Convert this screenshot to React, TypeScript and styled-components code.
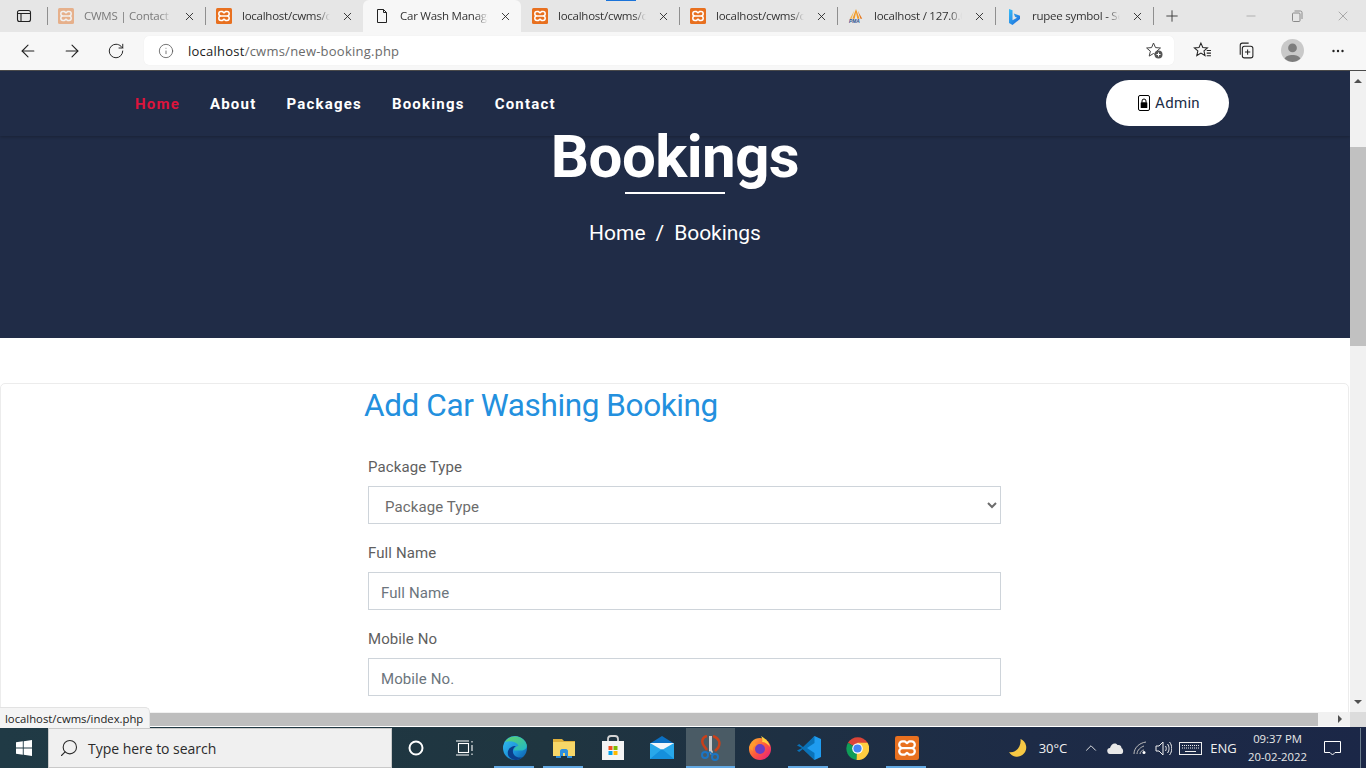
import React from 'react';
import styled, { createGlobalStyle } from 'styled-components';
import { ArrowLeft, ArrowRight, RotateCw, Info, X, Plus, Minus, Search, ChevronUp } from 'lucide-react';

const Global = createGlobalStyle`
  html, body { margin: 0; padding: 0; width: 1366px; height: 768px; overflow: hidden; background: #fff; }
  * { box-sizing: border-box; }
`;

const ui = `"Open Sans", "Noto Sans", sans-serif`;
const web = `Roboto, "Noto Sans", sans-serif`;

const Screen = styled.div`
  width: 1366px; height: 768px; display: flex; flex-direction: column; position: relative; overflow: hidden;
`;

/* ---------- tab strip ---------- */
const TabStrip = styled.div`
  height: 32px; flex: none; background: #e6e6e6; display: flex; align-items: stretch; position: relative; font-family: ${ui};
`;
const SideButton = styled.div`
  width: 47px; display: flex; align-items: center; justify-content: center; color: #222;
`;
const Tab = styled.div<{ $active?: boolean; $sep?: boolean; $dim?: boolean }>`
  width: 158px; height: 32px; display: flex; align-items: center; padding-left: 11px; position: relative;
  background: ${p => (p.$active ? '#f7f7f7' : 'transparent')};
  border-radius: ${p => (p.$active ? '6px 6px 0 0' : '0')};
  color: ${p => (p.$dim ? '#7a7a7a' : '#333')};
  ${p => p.$sep && `&::before { content: ''; position: absolute; left: 0; top: 7px; bottom: 7px; width: 1px; background: #8f8f8f; }`}
`;
const TabIcon = styled.span`
  width: 16px; height: 16px; flex: none; display: flex;
`;
const TabTitle = styled.span`
  margin-left: 10px; width: 88px; flex: none; overflow: hidden; white-space: nowrap; font-size: 11.5px; line-height: 16px; letter-spacing: -.25px;
  -webkit-mask-image: linear-gradient(to right, #000 86%, transparent 100%);
  mask-image: linear-gradient(to right, #000 86%, transparent 100%);
`;
const TabClose = styled.span`
  margin-left: 10px; width: 14px; height: 14px; display: flex; align-items: center; justify-content: center; color: #222;
`;
const NewTab = styled.div`
  width: 37px; display: flex; align-items: center; justify-content: center; color: #333; position: relative;
  &::before { content: ''; position: absolute; left: 0; top: 7px; bottom: 7px; width: 1px; background: #8f8f8f; }
`;
const Spacer = styled.div` flex: 1; `;
const WinBtn = styled.div`
  width: 46px; display: flex; align-items: center; justify-content: center; color: #8a8a8a;
`;
const Progress = styled.div`
  position: absolute; left: 606px; top: 0; width: 30px; height: 1px; background: #1a73d9;
`;

/* ---------- toolbar ---------- */
const Toolbar = styled.div`
  height: 39px; flex: none; background: #f7f7f7; display: flex; align-items: center; padding: 0 0 1px 6px; font-family: ${ui}; border-bottom: 1px solid #4a4a4a;
`;
const NavBtn = styled.div`
  width: 44px; height: 32px; display: flex; align-items: center; justify-content: center; color: #222;
`;
const Address = styled.div`
  margin-left: 6px; width: 1030px; height: 29px; background: #fff; border-radius: 5px; display: flex; align-items: center; padding-left: 14px; position: relative; box-shadow: 0 0 1px rgba(0,0,0,.08);
`;
const Url = styled.span`
  margin-left: 14px; font-size: 13px; color: #6a6a6a; letter-spacing: .24px;
  b { font-weight: 400; color: #1b1b1b; }
`;
const AddrFav = styled.span`
  position: absolute; right: 10px; top: 5px; display: flex;
`;
const ToolIcon = styled.div<{ $w: number }>`
  width: ${p => p.$w}px; display: flex; align-items: center; justify-content: center; color: #222;
`;
const ToolIcons = styled.div`
  display: flex; margin-left: 6px;
`;

/* ---------- viewport ---------- */
const ViewRow = styled.div`
  flex: 1; display: flex; min-height: 0;
`;
const Page = styled.div`
  flex: 1; min-width: 0; overflow: hidden; background: #fff; font-family: ${web}; display: flex; flex-direction: column;
`;
const TopNav = styled.nav`
  height: 65px; flex: none; background: #202c47; display: flex; align-items: center; justify-content: space-between; padding: 0 121px 0 135px; position: relative; z-index: 2; box-shadow: 0 1px 3px rgba(0,0,0,.25);
`;
const NavLinks = styled.div` display: flex; gap: 30px; `;
const NavLink = styled.a<{ $on?: boolean }>`
  font-size: 15px; font-weight: 700; letter-spacing: 1.2px; color: ${p => (p.$on ? '#dc143c' : '#fff')}; line-height: 20px;
`;
const AdminBtn = styled.a`
  width: 123px; height: 46px; border-radius: 23px; background: #fff; color: #202c47; display: flex; align-items: center; justify-content: center; gap: 5px; font-size: 15px; letter-spacing: .3px; margin-top: -1px; padding-left: 3px;
`;
const Hero = styled.header`
  height: 202px; flex: none; background: #202c47; display: flex; flex-direction: column; align-items: center; position: relative;
`;
const HeroTitle = styled.h1`
  margin: -15px 0 0; font-size: 60px; line-height: 72px; font-weight: 700; color: #fff; position: relative; z-index: 3; letter-spacing: -.55px;
  &::after { content: ''; position: absolute; left: 74px; bottom: -1px; width: 100px; height: 2px; background: #fff; }
`;
const Crumbs = styled.div`
  margin-top: 26px; color: #fff; font-size: 21px; line-height: 28px; display: flex; gap: 10px; letter-spacing: -.03px;
`;
const Card = styled.section`
  margin: 45px 1px 0 0; flex: 1; border: 1px solid #ececec; border-radius: 5px 5px 0 0; padding: 1px 0 0 363px;
`;
const FormTitle = styled.h2`
  margin: 0; font-size: 31.5px; font-weight: 400; line-height: 42px; color: #2390de; letter-spacing: -.4px;
`;
const Field = styled.div`
  width: 633px; margin-left: 4px; margin-bottom: 18px;
  &:first-of-type { margin-top: 29px; }
`;
const Label = styled.label`
  display: block; font-size: 15px; line-height: 22px; color: #5f5f5f; margin-bottom: 8px; letter-spacing: .1px;
`;
const Input = styled.input`
  display: block; width: 100%; height: 38px; border: 1px solid #ced4da; padding: 3px 12px 0; font-family: ${web}; font-size: 15px; color: #555; background: #fff; border-radius: 0; outline: none; letter-spacing: .1px;
  &::placeholder { color: #6c757d; opacity: 1; }
`;
const Select = styled.select`
  display: block; width: 100%; height: 38px; border: 1px solid #ced4da; padding: 3px 12px 0; font-family: ${web}; font-size: 15px; color: #6c6c6c; background: #fff; border-radius: 0; outline: none; letter-spacing: .1px;
`;

/* ---------- scrollbars ---------- */
const VBar = styled.div`
  width: 16px; flex: none; background: #f1f1f1; display: flex; flex-direction: column; align-items: center;
`;
const VThumb = styled.div`
  width: 16px; height: 199px; background: #c1c1c1; margin-top: 64px;
`;
const Arrow = styled.span<{ $dir: 'up' | 'down' | 'right' }>`
  width: 0; height: 0; display: block;
  ${p => p.$dir === 'up' && 'border-left:4px solid transparent;border-right:4px solid transparent;border-bottom:4px solid #505050;margin-top:8px;'}
  ${p => p.$dir === 'down' && 'border-left:4px solid transparent;border-right:4px solid transparent;border-top:4px solid #505050;margin-top:auto;margin-bottom:8px;'}
  ${p => p.$dir === 'right' && 'border-top:4px solid transparent;border-bottom:4px solid transparent;border-left:4px solid #505050;'}
`;
const HBar = styled.div`
  height: 15px; flex: none; background: #f1f1f1; display: flex; align-items: center; border-bottom: 1px solid #fff;
`;
const HThumb = styled.div`
  width: 1318px; height: 13px; background: #bebebe;
`;
const HArrowBox = styled.div`
  width: 32px; height: 14px; display: flex; align-items: center; justify-content: center;
  padding-left: 12px;
`;
const Corner = styled.div`
  width: 16px; height: 15px; background: #dcdcdc;
`;
const StatusTip = styled.div`
  position: absolute; left: 0; top: 707px; height: 21px; padding: 0 6px 0 5px; background: #f4f4f4; border: 1px solid #e2e2e2; border-left: 0; border-bottom: 0; border-radius: 0 5px 0 0; font: 11.3px/21px ${ui}; color: #222; z-index: 5;
`;

/* ---------- taskbar ---------- */
const Taskbar = styled.div`
  height: 41px; flex: none; background: linear-gradient(to right, #203a45 0%, #1f3540 40%, #1d2b46 75%, #1b2747 100%); display: flex; align-items: stretch; font-family: ${ui}; color: #fff; padding-top: 1px;
`;
const Start = styled.div`
  width: 48px; display: flex; align-items: center; justify-content: center;
`;
const SearchBox = styled.div`
  width: 344px; background: #f0f0f0; border: 1px solid #c9c9c9; display: flex; align-items: center; padding-left: 10px; color: #2b2b2b; font-size: 14px;
`;
const SearchLabel = styled.span` margin-left: 9px; letter-spacing: -.03px; `;
const TaskSlot = styled.div<{ $w?: number; $open?: boolean; $active?: boolean }>`
  width: ${p => p.$w ?? 49}px; display: flex; align-items: center; justify-content: center; position: relative;
  background: ${p => (p.$active ? '#4a5b65' : 'transparent')};
  ${p => p.$open && `&::after { content: ''; position: absolute; bottom: 0; left: ${p.$active ? 0 : 4}px; right: ${p.$active ? 0 : 5}px; height: 2px; background: #63a9e3; }`}
`;
const Tray = styled.div`
  margin-left: auto; display: flex; align-items: center; padding-right: 1px;
`;
const TrayItem = styled.div<{ $w: number; $pr?: number }>`
  width: ${p => p.$w}px; padding-right: ${p => p.$pr ?? 0}px; display: flex; align-items: center; justify-content: center; height: 100%; font-size: 13px; color: #f0f0f0;
`;
const Clock = styled.div`
  width: 71px; text-align: center; font-size: 11.3px; line-height: 18px; color: #e8e8e8; white-space: nowrap;
`;
const ShowDesktop = styled.div`
  width: 5px; margin-left: 9px; height: 100%; border-left: 1px solid #6a7c8c;
`;

/* ---------- drawn icons ---------- */
const Xampp = ({ s = 16, faded = false }: { s?: number; faded?: boolean }) => (
  <svg width={s} height={s} viewBox="0 0 16 16" aria-hidden opacity={faded ? 0.45 : 1}>
    <rect width="16" height="16" rx="1.5" fill="#e8701f" />
    <path d="M5 3.600h1.500L8 4.800l1.500-1.200H11a2.200 2.200 0 0 1 0 4.400 2.200 2.200 0 0 1 0 4.400H9.500L8 11.200l-1.500 1.200H5A2.200 2.200 0 0 1 5 8a2.200 2.200 0 0 1 0-4.400zM5 8h6" fill="none" stroke="#fff" strokeWidth="1.500" strokeLinejoin="round" />
  </svg>
);
const Doc = () => (
  <svg width="16" height="16" viewBox="0 0 16 16" fill="none" stroke="#222" strokeWidth="1"><path d="M3.500 1.500h6l3 3v10h-9z M9.500 1.500v3h3" /></svg>
);
const Pma = () => (
  <svg width="18" height="16" viewBox="0 0 18 16"><path d="M9 0 L13 11 H10.500 L9 4 7.500 11 H5z" fill="#f29a26" /><path d="M11 2 L16 11 H14z" fill="#e6781e" /><path d="M7 2 L2 11 H4z" fill="#f6b24a" /><text x="1" y="15.500" fontSize="5.500" fontWeight="700" fontStyle="italic" fill="#2a4f8f" fontFamily="Liberation Sans">PMA</text></svg>
);
const Bing = () => (
  <svg width="16" height="18" viewBox="0 0 16 18"><defs><linearGradient id="bg" x1="0" y1="0" x2="1" y2="1"><stop offset="0" stopColor="#37bdf8" /><stop offset="1" stopColor="#1b66d8" /></linearGradient></defs><path d="M3 1l3.500 1.200v10l4.500-2.500-2-1-1.200-3.200 6.200 2.200v3.300L6.500 17 3 15z" fill="url(#bg)" /></svg>
);
const LayoutIcon = () => (
  <svg width="16" height="16" viewBox="0 0 16 16" fill="none" stroke="#222" strokeWidth="1.100"><rect x="1.500" y="2.500" width="13" height="11" rx="2" /><path d="M1.500 5.500h13M5 5.500v8" /></svg>
);
const FavAdd = () => (
  <svg width="19" height="19" viewBox="0 0 19 19" fill="none"><path d="M8.500 2l2 4.600 5 .4-3.800 3.200 1.200 4.900L8.500 12.500 4.200 15.100l1.200-4.900L1.600 7l5-.4z" stroke="#444" /><circle cx="13.500" cy="13.500" r="4" fill="#555" /><path d="M13.500 11.500v4M11.500 13.500h4" stroke="#fff" /></svg>
);
const Favs = () => (
  <svg width="19" height="19" viewBox="0 0 18 18" fill="none" stroke="#222"><path d="M7.500 2l1.800 4.100 4.400.4-3.300 2.900 1 4.400L7.500 11.500 3.600 13.800l1-4.400L1.300 6.500l4.400-.4z" /><path d="M13 9h4M13 11.500h4M13 14h4" /></svg>
);
const Collections = () => (
  <svg width="19" height="19" viewBox="0 0 18 18" fill="none" stroke="#222"><rect x="6" y="5" width="10" height="11" rx="2" /><path d="M11 8v5M8.500 10.500h5M4 13V4a2 2 0 0 1 2-2h6" /></svg>
);
const Avatar = () => (
  <svg width="23" height="23" viewBox="0 0 22 22"><circle cx="11" cy="11" r="11" fill="#c9c9c9" /><circle cx="11" cy="8.500" r="4.200" fill="#7d7d7d" /><path d="M3.500 19c1-5 14-5 15 0a11 11 0 0 1-15 0z" fill="#7d7d7d" /></svg>
);
const Dots = () => (
  <svg width="16" height="16" viewBox="0 0 16 16" fill="#222"><circle cx="3.500" cy="8" r="1.200" /><circle cx="8" cy="8" r="1.200" /><circle cx="12.500" cy="8" r="1.200" /></svg>
);
const Restore = () => (
  <svg width="12" height="12" viewBox="0 0 12 12" fill="none" stroke="#8a8a8a"><rect x="1.500" y="3" width="7.500" height="8.500" rx="1" /><path d="M3.500 1h6a1.500 1.500 0 0 1 1.500 1.500V9" /></svg>
);
const LockIcon = () => (
  <svg width="12" height="16" viewBox="0 0 12 16"><rect x=".5" y=".5" width="11" height="15" rx="1.500" fill="#fff" stroke="#000" /><path d="M4 7.500V6a2 2 0 0 1 4 0v1.500" fill="none" stroke="#000" /><rect x="2.700" y="7.300" width="6.600" height="5.700" rx=".6" fill="#000" /></svg>
);
const WinLogo = () => (
  <svg width="16" height="16" viewBox="0 0 16 16" fill="#fff"><path d="M0 2.300l6.800-1v6.300H0zM7.700 1.200L16 0v7.600H7.700zM0 8.400h6.800v6.300l-6.800-1zM7.700 8.400H16V16l-8.300-1.200z" /></svg>
);
const Cortana = () => (
  <svg width="16" height="16" viewBox="0 0 16 16" fill="none" stroke="#fff" strokeWidth="2"><circle cx="8" cy="8" r="6.500" /></svg>
);
const TaskView = () => (
  <svg width="18" height="16" viewBox="0 0 18 16" fill="none" stroke="#fff" strokeWidth="1.100"><rect x="2.500" y="3.500" width="10" height="9" /><path d="M0 1h13M0 15h13M16 1v1.500M16 5v6M16 13.500V15" /></svg>
);
const Edge = () => (
  <svg width="26" height="26" viewBox="0 0 26 26">
    <defs><linearGradient id="eg" x1="0" y1="0" x2="1" y2="1"><stop offset="0" stopColor="#35c1f1" /><stop offset=".6" stopColor="#1b8fd8" /><stop offset="1" stopColor="#0c59a4" /></linearGradient>
      <linearGradient id="eg2" x1="0" y1="0" x2="1" y2="1"><stop offset="0" stopColor="#60d36b" /><stop offset="1" stopColor="#1fb6c9" /></linearGradient></defs>
    <circle cx="13" cy="13" r="12" fill="url(#eg)" />
    <path d="M3 7C7 0 20-1 24.500 9c1 3-.5 6-4 6.500H12c0-3 3-4 4.500-5C14 6 7 5.500 3 7z" fill="url(#eg2)" />
    <path d="M11 15c-1 5 4 9 10 7-3 2.500-6 3-8 3-6-1-8-5-7-9 .8-3 4-5 8-5-1.500 1-2.600 2-3 4z" fill="#0b3f8c" />
  </svg>
);
const Explorer = () => (
  <svg width="24" height="22" viewBox="0 0 24 22"><path d="M1 2h9l2 2h11v15H1z" fill="#e0b13c" /><rect x="1" y="5" width="22" height="14" fill="#f7d768" /><path d="M8 19v-5c0-1 1-2 2-2h4c1 0 2 1 2 2v5h-3v-3h-2v3z" fill="#2d8fdc" /><rect x="4" y="19" width="5" height="2" fill="#2d8fdc" /><rect x="15" y="19" width="5" height="2" fill="#2d8fdc" /></svg>
);
const Store = () => (
  <svg width="24" height="26" viewBox="0 0 24 26"><path d="M7 7V4a3 3 0 0 1 3-3h4a3 3 0 0 1 3 3v3" fill="none" stroke="#d4d4d4" strokeWidth="1.800" /><rect x="1" y="6" width="22" height="19" fill="#f4f4f4" /><rect x="7.500" y="11" width="4" height="4" fill="#f25022" /><rect x="12.500" y="11" width="4" height="4" fill="#7fba00" /><rect x="7.500" y="16" width="4" height="4" fill="#00a4ef" /><rect x="12.500" y="16" width="4" height="4" fill="#ffb900" /></svg>
);
const Mail = () => (
  <svg width="26" height="24" viewBox="0 0 26 24"><path d="M13 0L25 7.500H1z" fill="#0a6fc2" /><rect x="1" y="7" width="24" height="16" fill="#28a8ea" /><path d="M1 7h24L13 14z" fill="#f3f7fb" /><path d="M1 23L13 13l12 10z" fill="#1590dc" /></svg>
);
const Snip = () => (
  <svg width="22" height="26" viewBox="0 0 22 26" fill="none"><path d="M7 1c-5 1-6 6-3 10l3 4" stroke="#c9401a" strokeWidth="2.500" /><path d="M13 1c6 2 8 7 5 12l-3 3" stroke="#c9401a" strokeWidth="2.500" /><path d="M9 1h3v14l1 2-2 3-2-4z" fill="#c9c9c9" /><circle cx="5" cy="20" r="3" stroke="#1b75c4" strokeWidth="2" /><circle cx="15" cy="22" r="3" stroke="#1b75c4" strokeWidth="2" /><path d="M7 19l3-2 3 3" stroke="#1b75c4" strokeWidth="1.500" /></svg>
);
const Firefox = () => (
  <svg width="24" height="24" viewBox="0 0 24 24"><defs><linearGradient id="ff" x1="0" y1="0" x2="1" y2="1"><stop offset="0" stopColor="#ffbd2e" /><stop offset=".5" stopColor="#ff5a3c" /><stop offset="1" stopColor="#e31587" /></linearGradient></defs><circle cx="12" cy="13" r="11" fill="url(#ff)" /><path d="M13 0c5 3 8 6 9 11-2-3-5-5-8-5 1-2 0-4-1-6z" fill="#ffd23f" /><circle cx="12" cy="13" r="5" fill="#6a3fc4" /><path d="M1 12C2 8 5 5 7 4c-1 3 0 4 2 5-3 0-5 3-4 6z" fill="#ff9a2e" /></svg>
);
const VSCode = () => (
  <svg width="24" height="24" viewBox="0 0 24 24"><path d="M17.500 0L24 3v18l-6.500 3L6 13z" fill="#1f9cf0" /><path d="M17.500 0L6 11l-3.800-3L0 9.500 5 12l-5 2.500L2.200 16 6 13l11.500 11V17L10 12l7.500-5z" fill="#0a72b8" /></svg>
);
const Chrome = () => (
  <svg width="23" height="23" viewBox="0 0 24 24"><path d="M12 12L2 6a12 12 0 0 1 20.500 0z" fill="#db4437" /><path d="M12 12l-10-6a12 12 0 0 0 9 18z" fill="#0f9d58" /><path d="M12 6h10.500A12 12 0 0 1 11 24z" fill="#ffcd40" /><circle cx="12" cy="12" r="5.500" fill="#fff" /><circle cx="12" cy="12" r="4.300" fill="#4285f4" /></svg>
);
const Moon = () => (
  <svg width="20" height="20" viewBox="0 0 20 20"><path d="M12.500 1A9.200 9.200 0 1 1 1 14C7.500 15.500 13.500 9 12.500 1z" fill="#f6c844" /></svg>
);
const Cloud = () => (
  <svg width="17" height="11" viewBox="0 0 17 11" fill="#e8e8e8"><path d="M3.500 11a3 3 0 0 1-.5-6C4 1 8-1 10.500 2c3-.5 4 1.500 4 3 2 .5 2.500 6-.5 6z" /></svg>
);
const Wifi = () => (
  <svg width="14" height="14" viewBox="0 0 14 14" fill="none" stroke="#bdbdbd"><path d="M1 13C1 7 6 2 13 1M4 13c0-4 4-7 7-8M7 13c0-2 2-4 4-4" /><circle cx="11" cy="11.500" r="1.500" fill="#fff" stroke="none" /></svg>
);
const Speaker = () => (
  <svg width="17" height="15" viewBox="0 0 17 15" fill="none" stroke="#eee"><path d="M1 5h3l4-4v13l-4-4H1z" /><path d="M10.500 5c1 1.500 1 3.500 0 5M12.500 3c2 2.500 2 6.500 0 9M14.500 1c3 3.500 3 9.500 0 13" /></svg>
);
const Keyboard = () => (
  <svg width="23" height="13" viewBox="0 0 23 13" fill="none" stroke="#eee"><rect x=".5" y=".5" width="22" height="12" /><path d="M3 3.500h17M3 6h17" strokeDasharray="1 1" /><path d="M6 9.500h11" /></svg>
);
const Notify = () => (
  <svg width="17" height="15" viewBox="0 0 17 15" fill="none" stroke="#fff"><path d="M.5.500h16v11H11l-2.500 2.500L6 11.500H.5z" /></svg>
);

const tabs = [
  { t: 'CWMS | Contact Us', i: <Xampp faded />, dim: true },
  { t: 'localhost/cwms/contact', i: <Xampp /> },
  { t: 'Car Wash Management', i: <Doc />, active: true },
  { t: 'localhost/cwms/contact', i: <Xampp /> },
  { t: 'localhost/cwms/contact', i: <Xampp /> },
  { t: 'localhost / 127.0.0.1', i: <Pma /> },
  { t: 'rupee symbol - Search', i: <Bing /> },
];

const navItems = ['Home', 'About', 'Packages', 'Bookings', 'Contact'];

const apps = [
  { k: 'edge', i: <Edge />, open: true },
  { k: 'files', i: <Explorer />, open: true },
  { k: 'store', i: <Store /> },
  { k: 'mail', i: <Mail /> },
  { k: 'snip', i: <Snip />, open: true, active: true },
  { k: 'firefox', i: <Firefox /> },
  { k: 'vscode', i: <VSCode />, open: true },
  { k: 'chrome', i: <Chrome /> },
  { k: 'xampp', i: <Xampp s={24} />, open: true },
];

export default function App() {
  return (
    <Screen>
      <Global />
      <TabStrip>
        <SideButton><LayoutIcon /></SideButton>
        {tabs.map((t, i) => (
          <Tab key={i} $active={t.active} $sep={!t.active && !tabs[i - 1]?.active} $dim={t.dim}>
            <TabIcon>{t.i}</TabIcon>
            <TabTitle>{t.t}</TabTitle>
            <TabClose><X size={13} strokeWidth={1.6} /></TabClose>
          </Tab>
        ))}
        <NewTab><Plus size={18} strokeWidth={1.2} /></NewTab>
        <Spacer />
        <WinBtn><Minus size={14} strokeWidth={1} /></WinBtn>
        <WinBtn><Restore /></WinBtn>
        <WinBtn><X size={16} strokeWidth={1} /></WinBtn>
        <Progress />
      </TabStrip>
      <Toolbar>
        <NavBtn><ArrowLeft size={20} strokeWidth={1.3} /></NavBtn>
        <NavBtn><ArrowRight size={20} strokeWidth={1.3} /></NavBtn>
        <NavBtn><RotateCw size={18} strokeWidth={1.3} /></NavBtn>
        <Address>
          <Info size={16} strokeWidth={1.2} color="#555" />
          <Url><b>localhost</b>/cwms/new-booking.php</Url>
          <AddrFav><FavAdd /></AddrFav>
        </Address>
        <ToolIcons>
          <ToolIcon $w={44}><Favs /></ToolIcon>
          <ToolIcon $w={42}><Collections /></ToolIcon>
          <ToolIcon $w={52}><Avatar /></ToolIcon>
          <ToolIcon $w={40}><Dots /></ToolIcon>
        </ToolIcons>
      </Toolbar>
      <ViewRow>
        <Page>
          <TopNav>
            <NavLinks>
              {navItems.map((n, i) => <NavLink key={n} $on={i === 0}>{n}</NavLink>)}
            </NavLinks>
            <AdminBtn><LockIcon /> Admin</AdminBtn>
          </TopNav>
          <Hero>
            <HeroTitle>Bookings</HeroTitle>
            <Crumbs><span>Home</span><span>/</span><span>Bookings</span></Crumbs>
          </Hero>
          <Card>
            <FormTitle>Add Car Washing Booking</FormTitle>
            <Field>
              <Label>Package Type</Label>
              <Select defaultValue=""><option value="">Package Type</option></Select>
            </Field>
            <Field>
              <Label>Full Name</Label>
              <Input placeholder="Full Name" />
            </Field>
            <Field>
              <Label>Mobile No</Label>
              <Input placeholder="Mobile No." />
            </Field>
          </Card>
        </Page>
        <VBar>
          <Arrow $dir="up" />
          <VThumb />
          <Arrow $dir="down" />
        </VBar>
      </ViewRow>
      <HBar>
        <HThumb />
        <HArrowBox><Arrow $dir="right" /></HArrowBox>
        <Corner />
      </HBar>
      <StatusTip>localhost/cwms/index.php</StatusTip>
      <Taskbar>
        <Start><WinLogo /></Start>
        <SearchBox><Search size={20} strokeWidth={1.3} style={{ transform: 'scaleX(-1)' }} /><SearchLabel>Type here to search</SearchLabel></SearchBox>
        <TaskSlot $w={48}><Cortana /></TaskSlot>
        <TaskSlot $w={50}><TaskView /></TaskSlot>
        {apps.map(a => <TaskSlot key={a.k} $open={a.open} $active={a.active}>{a.i}</TaskSlot>)}
        <Tray>
          <TrayItem $w={24}><Moon /></TrayItem>
          <TrayItem $w={49} $pr={3}>30°C</TrayItem>
          <TrayItem $w={24}><ChevronUp size={18} strokeWidth={1.2} /></TrayItem>
          <TrayItem $w={25}><Cloud /></TrayItem>
          <TrayItem $w={23}><Wifi /></TrayItem>
          <TrayItem $w={24}><Speaker /></TrayItem>
          <TrayItem $w={30}><Keyboard /></TrayItem>
          <TrayItem $w={37}>ENG</TrayItem>
          <Clock>09:37 PM<br />20-02-2022</Clock>
          <TrayItem $w={38}><Notify /></TrayItem>
          <ShowDesktop />
        </Tray>
      </Taskbar>
    </Screen>
  );
}
